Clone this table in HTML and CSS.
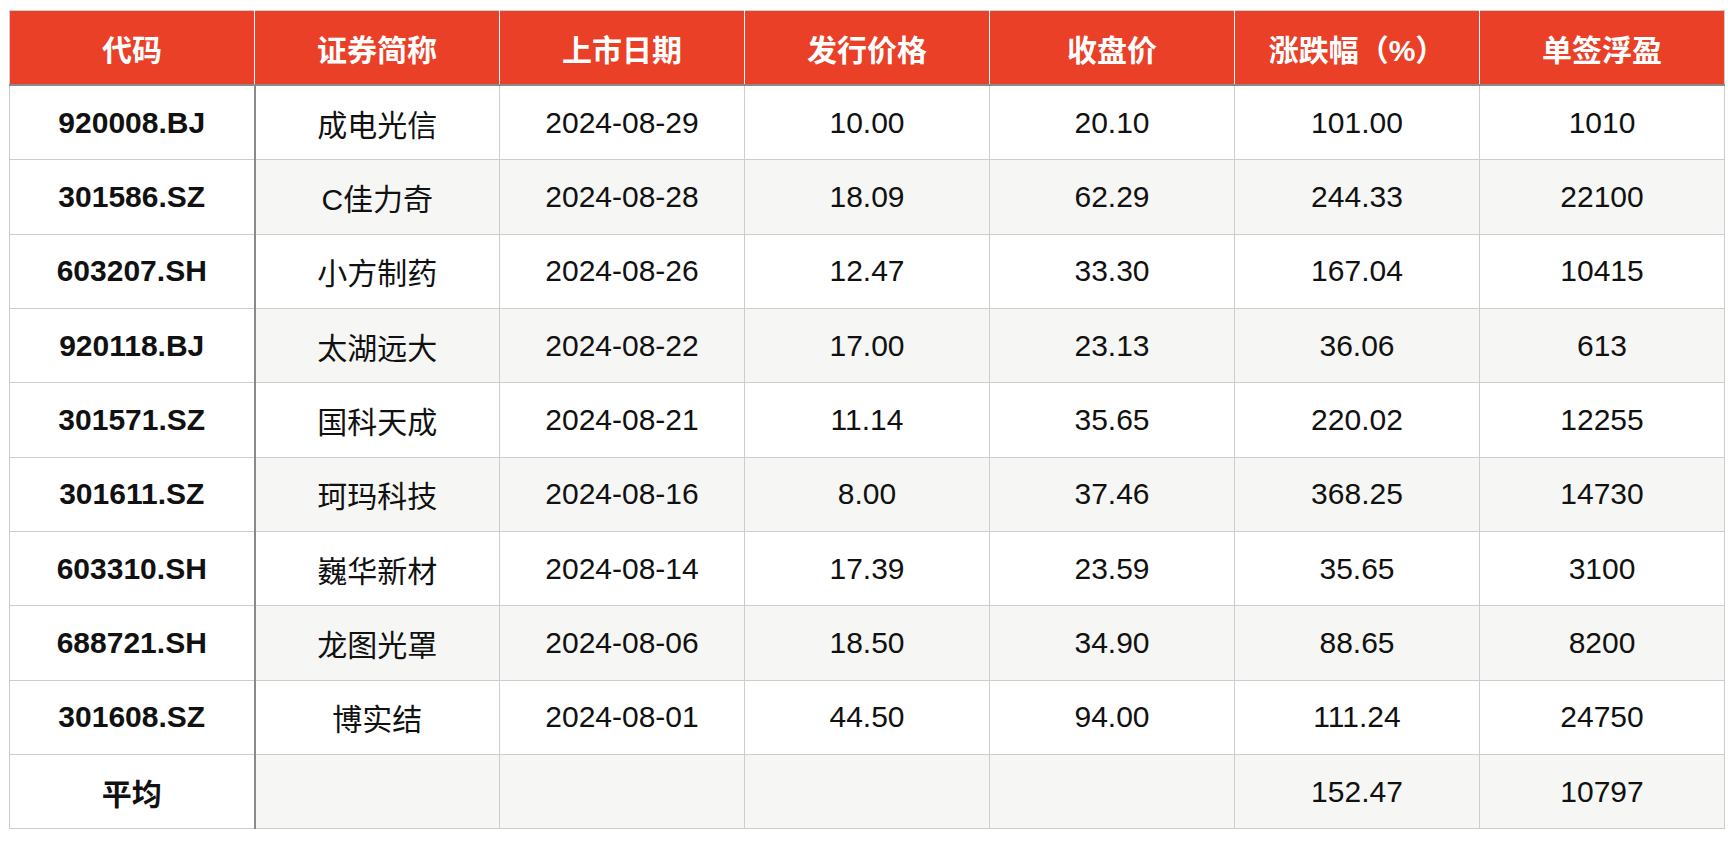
FILE: index.html
```html
<!DOCTYPE html>
<html lang="zh">
<head>
<meta charset="utf-8">
<link rel="stylesheet" href="styles.css">
</head>
<body>
<table class="ipo">
<thead>
<tr><th>代码</th><th>证券简称</th><th>上市日期</th><th>发行价格</th><th>收盘价</th><th>涨跌幅（%）</th><th>单签浮盈</th></tr>
</thead>
<tbody>
<tr><td class="code">920008.BJ</td><td>成电光信</td><td>2024-08-29</td><td>10.00</td><td>20.10</td><td>101.00</td><td>1010</td></tr>
<tr><td class="code">301586.SZ</td><td>C佳力奇</td><td>2024-08-28</td><td>18.09</td><td>62.29</td><td>244.33</td><td>22100</td></tr>
<tr><td class="code">603207.SH</td><td>小方制药</td><td>2024-08-26</td><td>12.47</td><td>33.30</td><td>167.04</td><td>10415</td></tr>
<tr><td class="code">920118.BJ</td><td>太湖远大</td><td>2024-08-22</td><td>17.00</td><td>23.13</td><td>36.06</td><td>613</td></tr>
<tr><td class="code">301571.SZ</td><td>国科天成</td><td>2024-08-21</td><td>11.14</td><td>35.65</td><td>220.02</td><td>12255</td></tr>
<tr><td class="code">301611.SZ</td><td>珂玛科技</td><td>2024-08-16</td><td>8.00</td><td>37.46</td><td>368.25</td><td>14730</td></tr>
<tr><td class="code">603310.SH</td><td>巍华新材</td><td>2024-08-14</td><td>17.39</td><td>23.59</td><td>35.65</td><td>3100</td></tr>
<tr><td class="code">688721.SH</td><td>龙图光罩</td><td>2024-08-06</td><td>18.50</td><td>34.90</td><td>88.65</td><td>8200</td></tr>
<tr><td class="code">301608.SZ</td><td>博实结</td><td>2024-08-01</td><td>44.50</td><td>94.00</td><td>111.24</td><td>24750</td></tr>
<tr><td class="code">平均</td><td></td><td></td><td></td><td></td><td>152.47</td><td>10797</td></tr>
</tbody>
</table>
</body>
</html>
```

FILE: styles.css
```css
html, body {
  background: #ffffff;
}
body {
  margin: 10px 0 0 9px;
  font-family: "Liberation Sans", "Noto Sans CJK SC", sans-serif;
}
.ipo {
  border-collapse: collapse;
  width: 1716px;
  table-layout: fixed;
  border: 1px solid #cdcdcd;
  font-size: 30px;
  color: #111111;
}
.ipo th {
  background: #ea4027;
  color: #ffffff;
  font-weight: bold;
  height: 73px;
  padding: 0;
  text-align: center;
  vertical-align: middle;
  border-left: 1px solid #ffffff;
  border-right: 1px solid #ffffff;
  border-bottom: 2px solid #8a8a8a;
  border-top: 1px solid #cdcdcd;
}
.ipo th:first-child {
  border-left: 1px solid #cdcdcd;
}
.ipo th:last-child {
  border-right: 1px solid #cdcdcd;
}
.ipo td {
  height: 73.33px;
  padding: 0;
  text-align: center;
  vertical-align: middle;
  border: 1px solid #cdcdcd;
}
.ipo tbody tr:nth-child(even) td {
  background: #f6f6f4;
}
.ipo tbody tr td.code {
  background: #ffffff;
  font-weight: bold;
  border-right: 2px solid #8a8a8a;
}
```
